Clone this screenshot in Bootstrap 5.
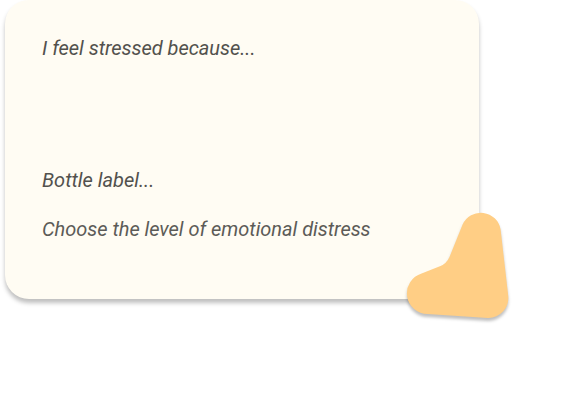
<!DOCTYPE html>
<html lang="en"><head><meta charset="utf-8"><title>Stress note</title>
<meta name="viewport" content="width=device-width, initial-scale=1">
<link href="https://cdn.jsdelivr.net/npm/bootstrap@5.3.0/dist/css/bootstrap.min.css" rel="stylesheet">
<style>
body{background:#fff;font-family:Roboto,sans-serif}
.note{width:474px;height:299.3px;margin-left:5px;padding:36px 37px;border-radius:24px;background:#fffcf3;box-shadow:0 4px 4px rgba(0,0,0,.25)}
.note p{font-size:20px;line-height:24px;font-style:italic;letter-spacing:-.03px;white-space:nowrap;color:#52514d}
.note .label-line{margin-top:108px;letter-spacing:0}
.note .distress-line{margin-top:25px;color:#5c5b57}
.corner{left:397px;top:202px}
</style></head><body>
<main class="position-relative vh-100">
<section class="note d-flex flex-column">
<p class="m-0">I feel stressed because...</p>
<p class="mb-0 label-line">Bottle label...</p>
<p class="mb-0 distress-line">Choose the level of emotional distress</p>
</section>
<svg class="corner position-absolute" width="120" height="125" viewBox="397 202 120 125" aria-hidden="true">
<defs><filter id="shade" x="-20%" y="-20%" width="140%" height="140%" color-interpolation-filters="sRGB"><feDropShadow dx="0" dy="3" stdDeviation="1.8" flood-color="#000" flood-opacity=".25"/></filter></defs>
<path filter="url(#shade)" fill="#ffce85" d="M462.600 224.600A20 20 0 0 1 500.600 229.500L508.200 295.500A20 20 0 0 1 488 318L427.700 314A20.700 20.700 0 0 1 421.600 273.500L440.500 266Q446.500 263.500 449.500 257Z"/>
</svg>
</main>
<script src="https://cdn.jsdelivr.net/npm/bootstrap@5.3.0/dist/js/bootstrap.bundle.min.js"></script>
</body></html>
